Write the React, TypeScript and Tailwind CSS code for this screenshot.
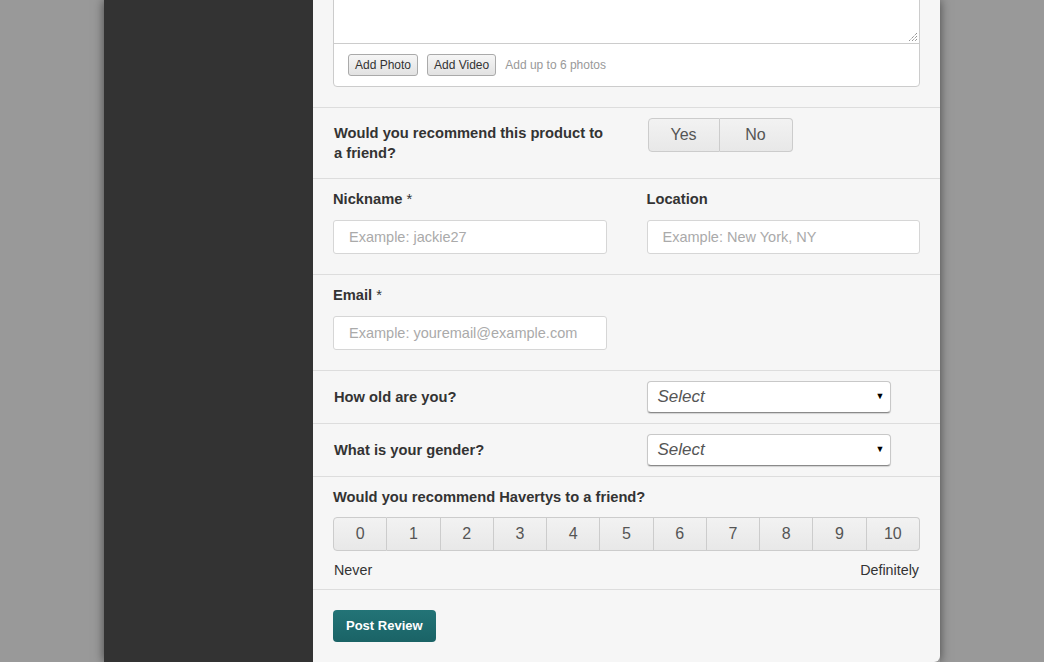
import React from 'react';

const SCALE = ['0', '1', '2', '3', '4', '5', '6', '7', '8', '9', '10'];

function Label({ children }: { children: React.ReactNode }) {
  return <div className="text-[14.7px] font-bold leading-5 text-[#333]">{children}</div>;
}

function TextInput({ placeholder }: { placeholder: string }) {
  return (
    <input
      type="text"
      placeholder={placeholder}
      className="h-[34px] w-full rounded-[3px] border border-[#d6d6d6] bg-white px-[15px] text-[14.5px] text-[#333] placeholder-[#aaa] outline-none"
    />
  );
}

function FakeSelect() {
  return (
    <div className="flex h-[32px] w-[244px] items-center justify-between rounded-[4px] border border-[#c8c8c8] border-b-[#8a8a8a] bg-white pl-[10px] pr-[5px] shadow-[0_1px_1px_rgba(0,0,0,0.15)]">
      <span className="text-[17px] italic text-[#555]">Select</span>
      <span className="text-[9px] text-black">▼</span>
    </div>
  );
}

export default function App() {
  return (
    <div className="flex h-[662px] w-full overflow-hidden bg-[#999] font-['Liberation_Sans',Arial,sans-serif]">
      <div className="ml-[104px] flex h-full w-[836px] shadow-[0_0_10px_rgba(0,0,0,0.55)]">
        {/* dark side column */}
        <div className="w-[209px] shrink-0 bg-[#333]" />

        {/* form column */}
        <div className="flex w-[627px] flex-col rounded-br-[6px] bg-[#f6f6f6]">
          {/* review text + media */}
          <div className="border-b border-[#ddd] px-5 pb-5">
            <div className="-mt-[20px] overflow-hidden rounded-b-[4px] border border-[#ccc] bg-white">
              <div className="relative h-[63px] border-b border-[#ccc]">
                <svg className="absolute bottom-[2px] right-[2px]" width="8" height="8" viewBox="0 0 8 8">
                  <path d="M8 0L0 8M8 3L3 8M8 6L6 8" stroke="#666" strokeWidth="1" strokeDasharray="1 1" />
                </svg>
              </div>
              <div className="flex h-[42px] items-center gap-[9px] px-[14px]">
                <button className="h-[22px] rounded-[3px] border border-[#aaa] bg-gradient-to-b from-[#f6f6f6] to-[#e2e2e2] px-[6px] text-[12px] text-[#333]">
                  Add Photo
                </button>
                <button className="h-[22px] rounded-[3px] border border-[#aaa] bg-gradient-to-b from-[#f6f6f6] to-[#e2e2e2] px-[6px] text-[12px] text-[#333]">
                  Add Video
                </button>
                <span className="text-[12px] text-[#999]">Add up to 6 photos</span>
              </div>
            </div>
          </div>

          {/* recommend product */}
          <div className="grid grid-cols-2 gap-10 border-b border-[#ddd] px-5 pt-[10px] pb-[15px]">
            <div className="pt-[5px] pl-px">
              <div className="w-[272px] text-[14.7px] font-bold leading-[20px] text-[#333]">
                Would you recommend this product to a friend?
              </div>
            </div>
            <div className="flex pl-px">
              <button className="h-[34px] w-[72px] rounded-l-[4px] border border-[#ccc] bg-gradient-to-b from-[#f2f2f2] to-[#e8e8e8] text-[16px] text-[#555]">
                Yes
              </button>
              <button className="h-[34px] w-[73px] rounded-r-[4px] border border-l-0 border-[#ccc] bg-gradient-to-b from-[#f2f2f2] to-[#e8e8e8] text-[16px] text-[#555]">
                No
              </button>
            </div>
          </div>

          {/* nickname + location */}
          <div className="grid grid-cols-2 gap-10 border-b border-[#ddd] px-5 pt-[10px] pb-5">
            <div className="flex flex-col gap-[11px]">
              <Label>
                Nickname <span className="font-normal">*</span>
              </Label>
              <TextInput placeholder="Example: jackie27" />
            </div>
            <div className="flex flex-col gap-[11px]">
              <Label>Location</Label>
              <TextInput placeholder="Example: New York, NY" />
            </div>
          </div>

          {/* email */}
          <div className="grid grid-cols-2 gap-10 border-b border-[#ddd] px-5 pt-[10px] pb-5">
            <div className="flex flex-col gap-[11px]">
              <Label>
                Email <span className="font-normal">*</span>
              </Label>
              <TextInput placeholder="Example: youremail@example.com" />
            </div>
          </div>

          {/* age */}
          <div className="grid grid-cols-2 items-center gap-10 border-b border-[#ddd] px-5 py-[10px]">
            <div className="pl-px">
              <Label>How old are you?</Label>
            </div>
            <FakeSelect />
          </div>

          {/* gender */}
          <div className="grid grid-cols-2 items-center gap-10 border-b border-[#ddd] px-5 py-[10px]">
            <div className="pl-px">
              <Label>What is your gender?</Label>
            </div>
            <FakeSelect />
          </div>

          {/* NPS scale */}
          <div className="border-b border-[#ddd] px-5 pt-[10px] pb-[9px]">
            <Label>Would you recommend Havertys to a friend?</Label>
            <div className="mt-[10px] flex h-[34px]">
              {SCALE.map((n, i) => (
                <button
                  key={n}
                  className={`flex-1 border border-[#ccc] bg-gradient-to-b from-[#f2f2f2] to-[#e8e8e8] text-[16px] text-[#555] ${
                    i === 0 ? 'rounded-l-[4px]' : 'border-l-0'
                  } ${i === SCALE.length - 1 ? 'rounded-r-[4px]' : ''}`}
                >
                  {n}
                </button>
              ))}
            </div>
            <div className="mt-[9px] flex justify-between text-[14.3px] leading-[20px] text-[#333]">
              <span className="pl-px">Never</span>
              <span className="pr-px">Definitely</span>
            </div>
          </div>

          {/* submit */}
          <div className="px-5 pt-5">
            <button className="h-[32px] rounded-[4px] bg-gradient-to-b from-[#237477] to-[#1a6366] px-[13px] text-[13px] font-bold text-white">
              Post Review
            </button>
          </div>
        </div>
      </div>
    </div>
  );
}
